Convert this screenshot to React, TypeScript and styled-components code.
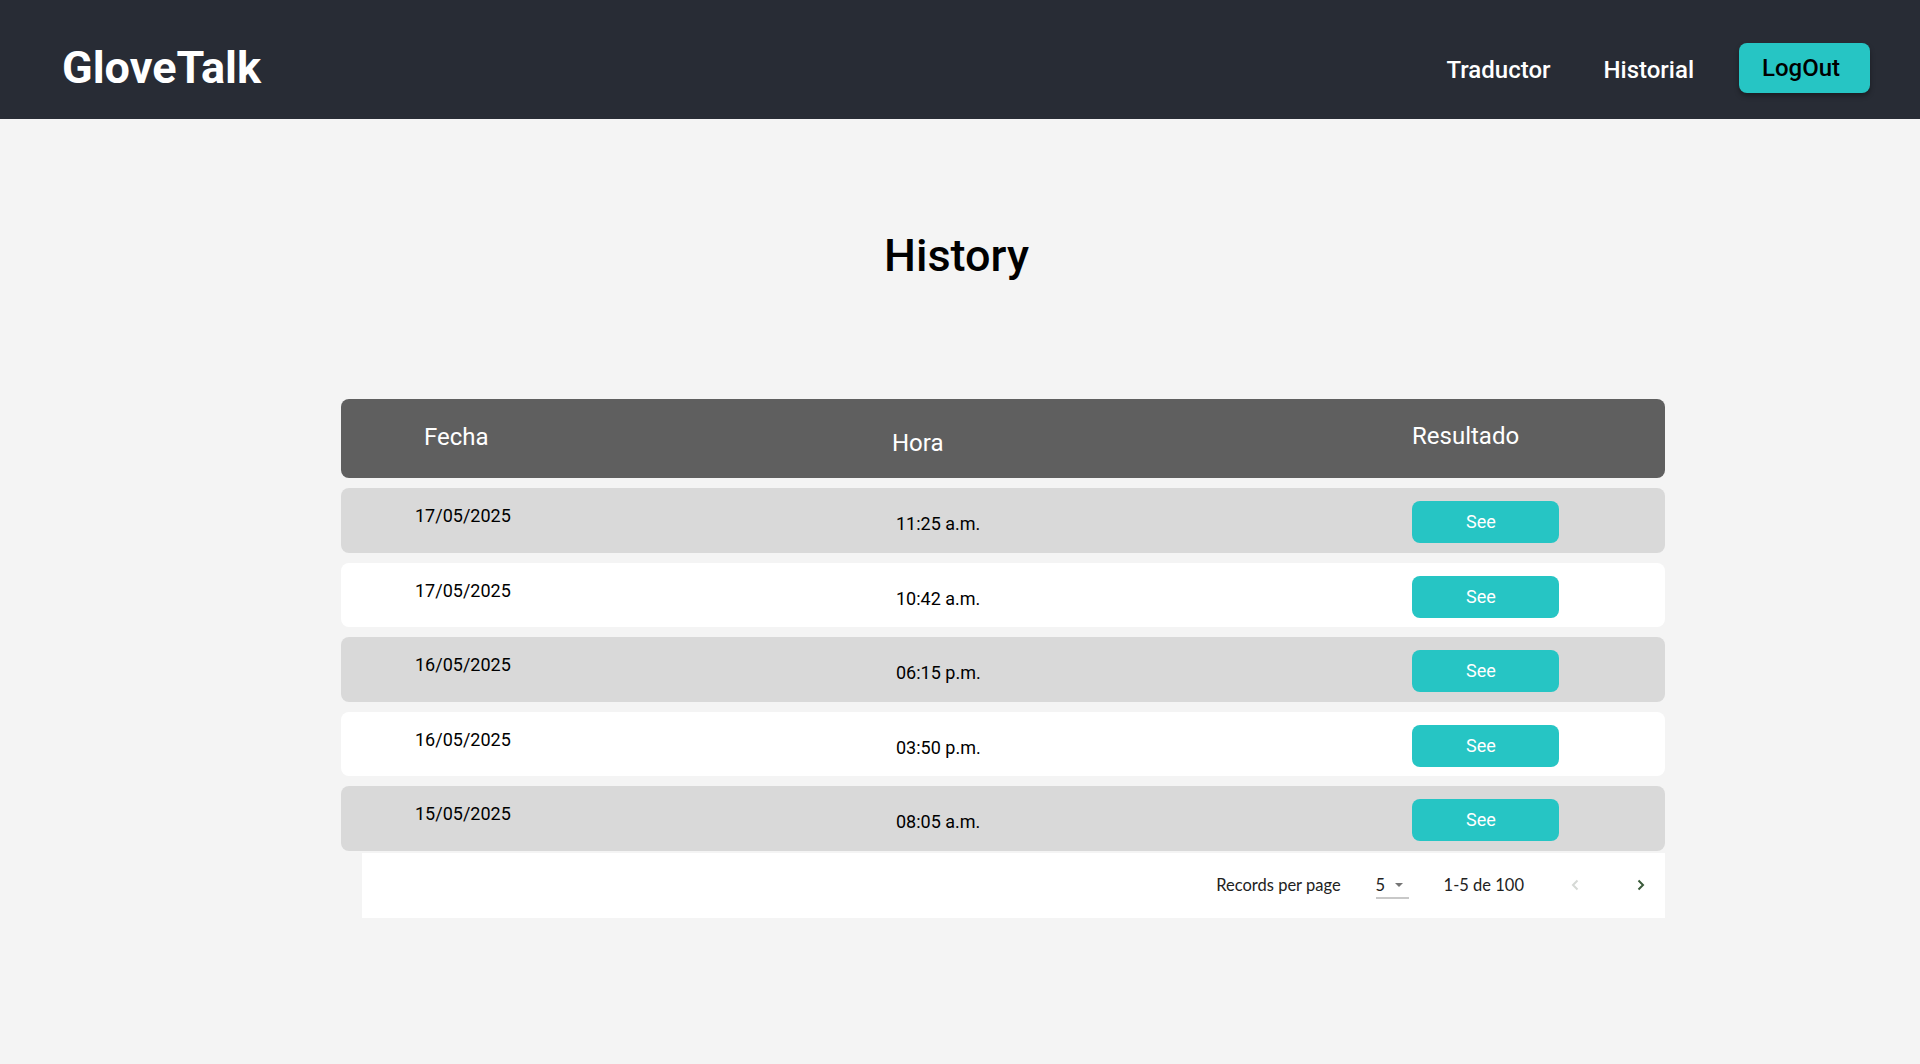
import React from 'react';
import styled, { createGlobalStyle } from 'styled-components';

type Entry = {
  date: string;
  time: string;
};

const entries: Entry[] = [
  { date: '17/05/2025', time: '11:25 a.m.' },
  { date: '17/05/2025', time: '10:42 a.m.' },
  { date: '16/05/2025', time: '06:15 p.m.' },
  { date: '16/05/2025', time: '03:50 p.m.' },
  { date: '15/05/2025', time: '08:05 a.m.' },
];

const Chevron: React.FC<{ dir: 'left' | 'right'; color: string }> = ({ dir, color }) => (
  <svg width="8" height="12" viewBox="0 0 8 12" fill="none">
    <path
      d={dir === 'left' ? 'M6.5 1.5 L2 6 L6.5 10.5' : 'M1.5 1.5 L6 6 L1.5 10.5'}
      stroke={color}
      strokeWidth="2"
    />
  </svg>
);

const App: React.FC = () => {
  return (
    <>
      <GlobalStyle />
      <TopBar>
        <Logo>GloveTalk</Logo>
        <Nav>
          <NavLink $space={53}>Traductor</NavLink>
          <NavLink $space={45}>Historial</NavLink>
          <LogOut>LogOut</LogOut>
        </Nav>
      </TopBar>

      <Main>
        <Title>History</Title>

        <Table>
          <HeadRow>
            <HeadCell $drop={1}>Fecha</HeadCell>
            <HeadCell $drop={7}>Hora</HeadCell>
            <HeadCell $drop={0}>Resultado</HeadCell>
          </HeadRow>

          {entries.map((e, i) => (
            <Row key={i} $shade={i % 2 === 0}>
              <Cell $drop={17}>{e.date}</Cell>
              <Cell $drop={25}>{e.time}</Cell>
              <SeeButton>See</SeeButton>
            </Row>
          ))}

          <Pager>
            <PagerLabel $space={35}>Records per page</PagerLabel>
            <PerPage>
              5
              <Caret />
            </PerPage>
            <PagerLabel $space={39}>1-5 de 100</PagerLabel>
            <PageButton>
              <Chevron dir="left" color="#d6d9d6" />
            </PageButton>
            <PageButton>
              <Chevron dir="right" color="#3a5a3a" />
            </PageButton>
          </Pager>
        </Table>
      </Main>
    </>
  );
};

const GlobalStyle = createGlobalStyle`
  html, body {
    margin: 0;
    padding: 0;
    background: #f4f4f4;
    font-family: Roboto, "Liberation Sans", sans-serif;
  }
  * {
    box-sizing: border-box;
  }
`;

const TopBar = styled.header`
  height: 119px;
  background: #282c35;
  display: flex;
  align-items: center;
  justify-content: space-between;
  padding: 17px 50px 0 62px;
`;

const Logo = styled.div`
  color: #ffffff;
  font-size: 45px;
  font-weight: 700;
  line-height: 52px;
`;

const Nav = styled.nav`
  display: flex;
  align-items: center;
`;

const NavLink = styled.a<{ $space: number }>`
  color: #ffffff;
  font-size: 24px;
  font-weight: 500;
  line-height: 28px;
  margin-top: 4px;
  margin-right: ${(p) => p.$space}px;
  cursor: pointer;
`;

const LogOut = styled.button`
  width: 131px;
  height: 50px;
  border: none;
  border-radius: 8px;
  background: #26c5c4;
  color: #000000;
  font-family: Roboto, "Liberation Sans", sans-serif;
  font-size: 24px;
  font-weight: 500;
  line-height: 28px;
  text-align: left;
  padding: 0 0 0 23px;
  box-shadow: 0 3px 5px rgba(0, 0, 0, 0.35);
  cursor: pointer;
`;

const Main = styled.main`
  padding-top: 110px;
  padding-bottom: 120px;
`;

const Title = styled.h1`
  margin: 0;
  text-align: center;
  font-size: 45px;
  font-weight: 500;
  line-height: 54px;
  color: #000000;
  padding-right: 7px;
`;

const Table = styled.section`
  margin: 116px 255px 0 341px;
`;

const HeadRow = styled.div`
  height: 79px;
  background: #5f5f5f;
  border-radius: 8px;
  display: grid;
  grid-template-columns: 468px 520px 1fr;
  align-items: start;
  padding: 23px 0 0 83px;
`;

const HeadCell = styled.div<{ $drop: number }>`
  color: #ffffff;
  font-size: 24px;
  line-height: 28px;
  padding-top: ${(p) => p.$drop}px;
`;

const Row = styled.div<{ $shade: boolean }>`
  height: 64.5px;
  margin-top: 10px;
  background: ${(p) => (p.$shade ? '#d9d9d9' : '#ffffff')};
  border-radius: 8px;
  display: grid;
  grid-template-columns: 481px 516px 1fr;
  align-items: start;
  padding-left: 74px;
`;

const Cell = styled.div<{ $drop: number }>`
  color: #000000;
  font-size: 18px;
  line-height: 22px;
  padding-top: ${(p) => p.$drop}px;
`;

const SeeButton = styled.button`
  width: 147px;
  height: 42px;
  margin-top: 13px;
  border: none;
  border-radius: 8px;
  background: #26c5c4;
  color: #ffffff;
  font-family: Roboto, "Liberation Sans", sans-serif;
  font-size: 18px;
  line-height: 22px;
  padding: 0 9px 0 0;
  cursor: pointer;
`;

const Pager = styled.div`
  margin: 2px 0 0 21px;
  height: 65px;
  background: #ffffff;
  display: flex;
  align-items: center;
  justify-content: flex-end;
  padding-right: 12px;
  font-family: Lato, "Open Sans", sans-serif;
  color: #222222;
`;

const PagerLabel = styled.span<{ $space: number }>`
  font-size: 16.5px;
  margin-right: ${(p) => p.$space}px;
`;

const PerPage = styled.div`
  width: 33px;
  margin-right: 35px;
  font-size: 16.5px;
  line-height: 20px;
  padding-top: 4px;
  padding-bottom: 2px;
  border-bottom: 2px solid #c8c8c8;
  display: flex;
  align-items: center;
  gap: 10px;
`;

const Caret = styled.span`
  width: 0;
  height: 0;
  border-left: 4px solid transparent;
  border-right: 4px solid transparent;
  border-top: 4px solid #757575;
`;

const PageButton = styled.button`
  width: 24px;
  height: 24px;
  border: none;
  background: transparent;
  padding: 0;
  display: flex;
  align-items: center;
  justify-content: center;
  cursor: pointer;
  & + & {
    margin-left: 42px;
  }
`;

export default App;
